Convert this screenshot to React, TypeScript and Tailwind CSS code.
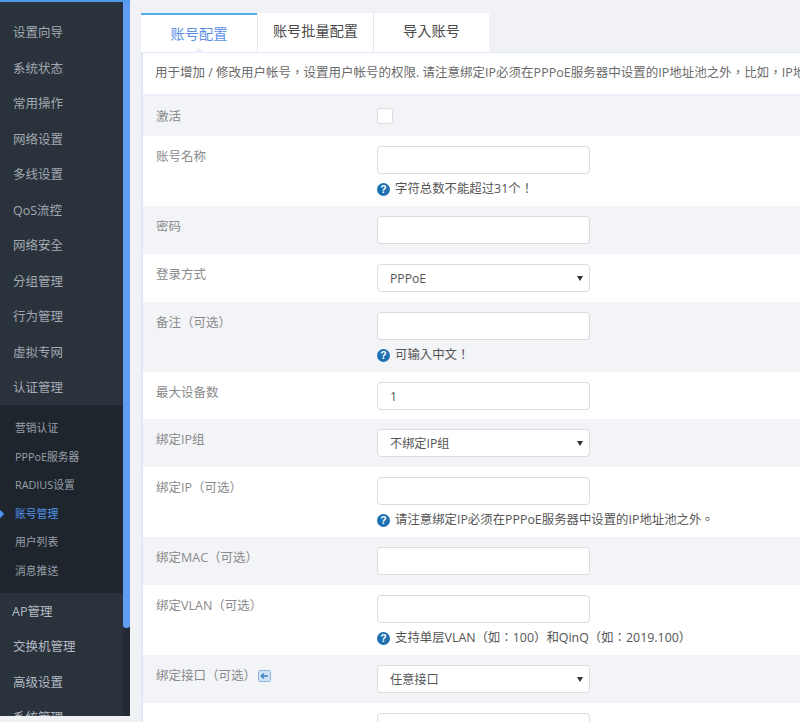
import React from "react";

const FONT = "[font-family:'Open_Sans','Noto_Sans_CJK_TC',sans-serif]";

function Help() {
  return (
    <svg width="13" height="13" viewBox="0 0 13 13" className="shrink-0">
      <circle cx="6.5" cy="6.5" r="6.5" fill="#1c6fb0" />
      <text x="6.5" y="10" textAnchor="middle" fontSize="10.5" fontWeight="700" fill="#fff" fontFamily="'Liberation Sans',sans-serif">?</text>
    </svg>
  );
}

function Arrow() {
  return <span className="h-0 w-0 border-x-[3px] border-t-[5px] border-x-transparent border-t-[#333]" />;
}

function Control({ value, select }: { value?: string; select?: boolean }) {
  return (
    <div className="flex h-[28px] w-[213px] items-center justify-between rounded-[4px] border border-[#dcdcdc] bg-white pl-[12px] pr-[6px] text-[12.2px] text-[#555]">
      <span className="pt-[3px]">{value}</span>
      {select && <Arrow />}
    </div>
  );
}

type Row = {
  label: string;
  value?: string;
  select?: boolean;
  hint?: string;
  gray?: boolean;
  check?: boolean;
  icon?: boolean;
  h: string;
};

const rows: Row[] = [
  { label: "激活", gray: true, check: true, h: "h-[40px]" },
  { label: "账号名称", hint: "字符总数不能超过31个！", h: "h-[70px]" },
  { label: "密码", gray: true, h: "h-[48px]" },
  { label: "登录方式", value: "PPPoE", select: true, h: "h-[48px]" },
  { label: "备注（可选）", hint: "可输入中文！", gray: true, h: "h-[70px]" },
  { label: "最大设备数", value: "1", h: "h-[47px]" },
  { label: "绑定IP组", value: "不绑定IP组", select: true, gray: true, h: "h-[48px]" },
  { label: "绑定IP（可选）", hint: "请注意绑定IP必须在PPPoE服务器中设置的IP地址池之外。", h: "h-[70px]" },
  { label: "绑定MAC（可选）", gray: true, h: "h-[48px]" },
  { label: "绑定VLAN（可选）", hint: "支持单层VLAN（如：100）和QinQ（如：2019.100）", h: "h-[70px]" },
  { label: "绑定接口（可选）", value: "任意接口", select: true, gray: true, icon: true, h: "h-[48px]" },
  { label: "", h: "h-[48px]" },
];

const navTop = ["设置向导", "系统状态", "常用操作", "网络设置", "多线设置", "QoS流控", "网络安全", "分组管理", "行为管理", "虚拟专网", "认证管理"];
const navSub = ["营销认证", "PPPoE服务器", "RADIUS设置", "账号管理", "用户列表", "消息推送"];
const navBottom = ["AP管理", "交换机管理", "高级设置", "系统管理"];

function NavItem({ text, bright }: { text: string; bright?: boolean }) {
  return (
    <div className={`flex h-[35.5px] items-center pt-[3px] text-[12.5px] ${bright ? "text-[#b4bac2]" : "text-[#a3a9b1]"} ${text === "AP管理" ? "pl-[12px]" : "pl-[13px]"}`}>
      {text}
    </div>
  );
}

export default function App() {
  return (
    <div className={`flex h-[722px] w-[800px] overflow-hidden bg-[#f1f2f6] ${FONT}`}>
      <aside className="flex h-[716px] w-[130px] shrink-0 border-t-2 border-[#4d9be8] bg-[#232a33]">
        <div className="w-[123px] overflow-hidden bg-[#2a323c] pt-[12.5px]">
          {navTop.map((t) => (
            <NavItem key={t} text={t} />
          ))}
          <div className="bg-[#1f252d] pb-[8px] pt-[9px]">
            {navSub.map((t) => (
              <div
                key={t}
                className={`relative flex h-[28.5px] items-center pl-[15px] text-[10.8px] ${t === "账号管理" ? "text-[#4f93ea]" : "text-[#98a0a9]"}`}
              >
                {t === "账号管理" && <span className="absolute left-[-3px] top-[11px] h-[6px] w-[6px] rotate-45 bg-[#4f93ea]" />}
                {t}
              </div>
            ))}
          </div>
          {navBottom.map((t) => (
            <NavItem key={t} text={t} bright />
          ))}
        </div>
        <div className="h-[626px] w-[7px] rounded-b-[3px] bg-[#5f9cf2]" />
      </aside>

      <main className="min-w-0 flex-1 pl-[11px] pt-[13px]">
        <div className="flex h-[39px] items-stretch text-[14.2px]">
          <div className="relative flex w-[116px] items-center justify-center border-t-[2px] border-[#5aaeee] bg-white pt-[1px] text-[#5b8fe6]">
            账号配置
            <span className="absolute bottom-[-1px] left-[52px] h-0 w-0 border-x-[6px] border-b-[5px] border-x-transparent border-b-[#e9eefa]" />
          </div>
          <div className="flex w-[116px] items-center justify-center border-l border-[#e8e8ec] bg-white pb-[3px] text-[#4a4a4a]">
            账号批量配置
          </div>
          <div className="flex w-[116px] items-center justify-center border-l border-[#e8e8ec] bg-white pb-[3px] text-[#4a4a4a]">
            导入账号
          </div>
        </div>
        <div className="w-[700px] border-l-2 border-t border-[#e0e8f8] bg-white">
          <div className="flex h-[43px] items-center whitespace-nowrap border-b-2 border-[#eef2fb] pl-[12px] text-[12.5px] text-[#6a6a6a]">
            用于增加 / 修改用户帐号，设置用户帐号的权限. 请注意绑定IP必须在PPPoE服务器中设置的IP地址池之外，比如，IP地
          </div>
          {rows.map((r, i) => (
            <div key={i} className={`flex ${r.h} ${r.gray ? "bg-[#f3f4f7]" : "bg-white"}`}>
              <div className="flex w-[234px] shrink-0 items-start gap-[2px] whitespace-nowrap pl-[13px] pt-[12px] text-[12.5px] text-[#8a8a8a]">
                {r.label}
                {r.icon && (
                  <svg width="13" height="12" viewBox="0 0 13 12" className="mt-[3px]">
                    <rect x="0.5" y="0.5" width="12" height="11" rx="1" fill="#cfe3f7" stroke="#8fb4d8" />
                    <path d="M3 6h7M3 6l3-2.5M3 6l3 2.5" stroke="#3b7fc4" strokeWidth="1.4" fill="none" />
                  </svg>
                )}
              </div>
              <div className={r.check ? "pt-[12px]" : "pt-[10px]"}>
                {r.check ? (
                  <div className="h-[16px] w-[16px] rounded-[3px] border border-[#dcdcdc] bg-white" />
                ) : (
                  <>
                    <Control value={r.value} select={r.select} />
                    {r.hint && (
                      <div className="mt-[6px] flex items-center gap-[5px] whitespace-nowrap text-[12.4px] text-[#555]">
                        <Help />
                        {r.hint}
                      </div>
                    )}
                  </>
                )}
              </div>
            </div>
          ))}
        </div>
      </main>
    </div>
  );
}
